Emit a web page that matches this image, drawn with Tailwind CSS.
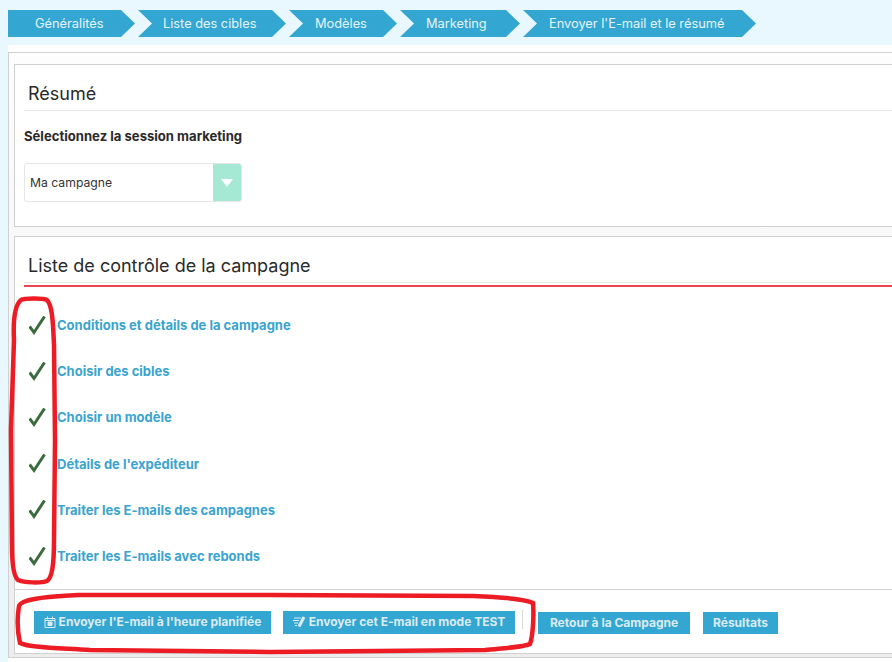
<!DOCTYPE html>
<html lang="fr">
<head>
    <meta charset="UTF-8">
    <title>Résumé de la campagne</title>
    <script src="https://cdn.jsdelivr.net/npm/@tailwindcss/browser@4"></script>
</head>
<body class="relative w-[892px] h-[662px] overflow-hidden bg-[#e9f8fe] font-['Inter','Liberation_Sans',sans-serif] text-[#2a2a2a]">

    <!-- steps -->
    <div class="h-[45px] pt-[10px] pl-[8px] flex gap-[3px] text-[12.8px] text-[#e6f4f9]">
        <div class="w-[127px] h-[27px] pl-[27px] flex items-center bg-[#33a7d1] [clip-path:polygon(0_0,113px_0,100%_50%,113px_100%,0_100%)]">Généralités</div>
        <div class="w-[148px] h-[27px] pl-[25px] flex items-center bg-[#33a7d1] [clip-path:polygon(0_0,134px_0,100%_50%,134px_100%,0_100%,14px_50%)]">Liste des cibles</div>
        <div class="w-[108px] h-[27px] pl-[26px] flex items-center bg-[#33a7d1] [clip-path:polygon(0_0,94px_0,100%_50%,94px_100%,0_100%,14px_50%)]">Modèles</div>
        <div class="w-[120px] h-[27px] pl-[26px] flex items-center bg-[#33a7d1] [clip-path:polygon(0_0,106px_0,100%_50%,106px_100%,0_100%,14px_50%)]">Marketing</div>
        <div class="w-[233px] h-[27px] pl-[26px] flex items-center bg-[#33a7d1] [clip-path:polygon(0_0,219px_0,100%_50%,219px_100%,0_100%,14px_50%)]">Envoyer l'E-mail et le résumé</div>
    </div>

    <!-- main -->
    <div class="ml-[8px] w-[900px] h-[617px] bg-white pt-[7px]">
        <div class="h-[606px] border border-[#d0d0d0] bg-gradient-to-b from-[#fdfdfd] to-[#ededed] pl-[5px] pt-[11px]">

            <!-- resume -->
            <div class="h-[163px] border border-[#d0d0d0] bg-white pl-[9px] pt-[10px]">
                <h2 class="h-[36px] pl-[4px] border-b border-[#e8e8e8] text-[18px] leading-[38px]">Résumé</h2>
                <p class="mt-[17px] text-[13.1px] leading-[16px] font-bold">Sélectionnez la session marketing</p>
                <div class="mt-[19px] w-[218px] h-[39px] flex justify-between border border-[#e6e6e6] rounded-[3px] overflow-hidden">
                    <span class="pl-[5px] text-[12.2px] leading-[37px] text-[#333]">Ma campagne</span>
                    <span class="w-[28px] flex items-center justify-center bg-[#a5e8d4]">
                        <svg width="12" height="8" viewBox="0 0 12 8"><path d="M0 0h12L6 8z" fill="#fff"/></svg>
                    </span>
                </div>
            </div>

            <!-- checklist -->
            <div class="mt-[9px] h-[418px] border border-[#d0d0d0] bg-white">
                <div class="pl-[9px] pt-[10px]">
                    <h2 class="h-[36px] pl-[4px] text-[18px] leading-[37px] border-b border-[#e8e8e8]">Liste de contrôle de la campagne</h2>
                    <div class="h-[2px] mt-[2px] bg-[#f04452]"></div>
                </div>
                <ul class="pt-[15.6px] h-[302px] text-[13px] font-bold text-[#3aa4cf]">
                    <li class="h-[46.2px] flex items-center pl-[14px] gap-[10px]"><svg class="shrink-0" width="18" height="20" viewBox="1 1 18 20"><path d="M1.5 11.5 6 17.5 16.5 1.5" fill="none" stroke="#3a6b3c" stroke-width="3"/></svg>Conditions et détails de la campagne</li>
                    <li class="h-[46.2px] flex items-center pl-[14px] gap-[10px]"><svg class="shrink-0" width="18" height="20" viewBox="1 1 18 20"><path d="M1.5 11.5 6 17.5 16.5 1.5" fill="none" stroke="#3a6b3c" stroke-width="3"/></svg>Choisir des cibles</li>
                    <li class="h-[46.2px] flex items-center pl-[14px] gap-[10px]"><svg class="shrink-0" width="18" height="20" viewBox="1 1 18 20"><path d="M1.5 11.5 6 17.5 16.5 1.5" fill="none" stroke="#3a6b3c" stroke-width="3"/></svg>Choisir un modèle</li>
                    <li class="h-[46.2px] flex items-center pl-[14px] gap-[10px]"><svg class="shrink-0" width="18" height="20" viewBox="1 1 18 20"><path d="M1.5 11.5 6 17.5 16.5 1.5" fill="none" stroke="#3a6b3c" stroke-width="3"/></svg>Détails de l'expéditeur</li>
                    <li class="h-[46.2px] flex items-center pl-[14px] gap-[10px]"><svg class="shrink-0" width="18" height="20" viewBox="1 1 18 20"><path d="M1.5 11.5 6 17.5 16.5 1.5" fill="none" stroke="#3a6b3c" stroke-width="3"/></svg>Traiter les E-mails des campagnes</li>
                    <li class="h-[46.2px] flex items-center pl-[14px] gap-[10px]"><svg class="shrink-0" width="18" height="20" viewBox="1 1 18 20"><path d="M1.5 11.5 6 17.5 16.5 1.5" fill="none" stroke="#3a6b3c" stroke-width="3"/></svg>Traiter les E-mails avec rebonds</li>
                </ul>
                <div class="border-t border-[#d0d0d0] pt-[21px] pl-[19px] flex items-start text-[12px] font-bold text-[#dcebf1]">
                    <button class="w-[237px] h-[23px] pb-[1px] flex items-center justify-center gap-[3px] bg-[#33a7d1]">
                        <svg width="12" height="12" viewBox="0 0 12 12" fill="none" stroke="#dcebf1"><path d="M1 2.5h10v9H1zM3.500 .5v3M8.500 .5v3M1 4.500h10"/><path d="M4 6h4v3.500H4z" fill="#dcebf1"/></svg>
                        Envoyer l'E-mail à l'heure planifiée
                    </button>
                    <button class="ml-[12px] w-[232px] h-[23px] pb-[1px] flex items-center justify-center gap-[3px] bg-[#33a7d1]">
                        <svg width="13" height="12" viewBox="0 0 13 12" fill="none" stroke="#dcebf1" stroke-width="1.2"><path d="M1 2h7M0 4.500h6M1 7h4M2 9.500h2"/><path d="M6 10.500 11 1" stroke-width="3"/></svg>
                        Envoyer cet E-mail en mode TEST
                    </button>
                    <span class="ml-[7px] w-px h-[19px] mt-[-1px] bg-[#d8d8d8]"></span>
                    <button class="ml-[15px] mt-[1px] w-[152px] h-[22px] pb-[1px] bg-[#33a7d1]">Retour à la Campagne</button>
                    <button class="ml-[13px] mt-[1px] w-[75px] h-[22px] pb-[1px] bg-[#33a7d1]">Résultats</button>
                </div>
            </div>
        </div>
    </div>

    <!-- red annotations drawn on top of the screenshot -->
    <svg class="absolute top-0 left-0" width="892" height="662" viewBox="0 0 892 662" fill="none" stroke="#ed1c24" stroke-width="4.500">
        <path d="M14 340C13 320 15 305 21 300 24 298 44 298 47 300 52 305 53 320 54 345L55 440 54 540C54 565 52 578 47 581 42 583 24 583 18 580 13 576 12 560 12 545L11 430Z"/>
        <path d="M78 595C50 597 22 598 19 606 17 618 17 630 20 643 30 648 60 648 90 650L270 652 485 650C505 648 525 647 530 644 533 636 534 615 533 603 525 599 500 597 473 596L270 595Z"/>
    </svg>
</body>
</html>
